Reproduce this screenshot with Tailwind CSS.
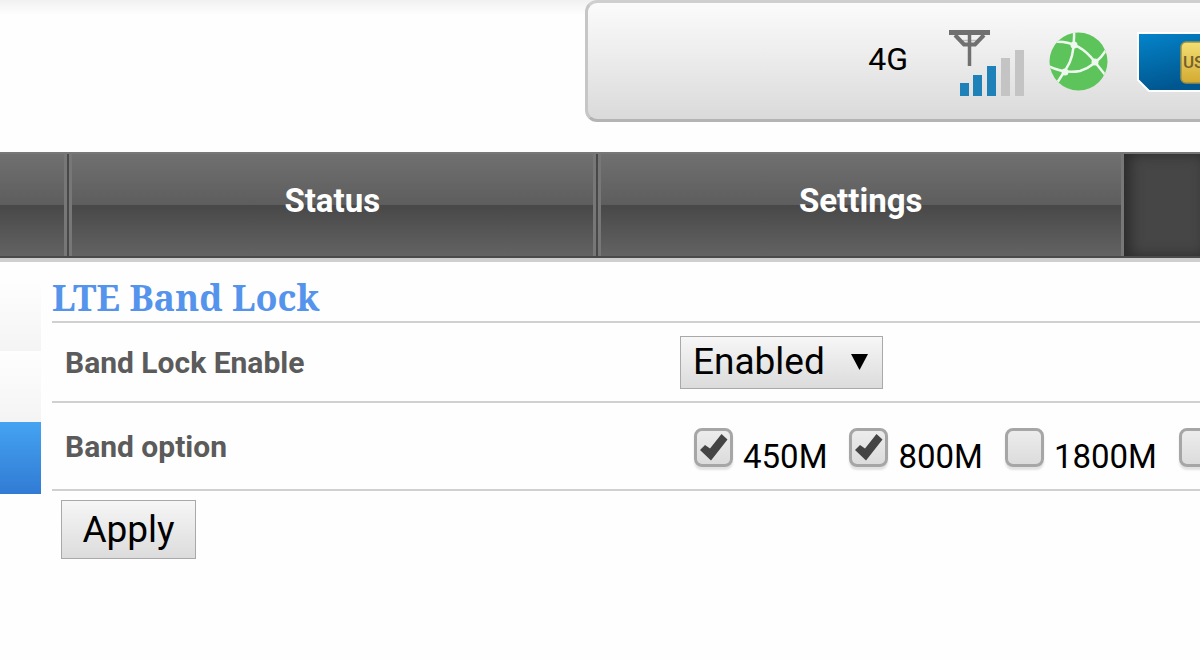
<!DOCTYPE html>
<html lang="en">
<head>
<meta charset="utf-8">
<meta name="viewport" content="width=device-width, initial-scale=1">
<title>LTE Band Lock</title>
<script src="https://cdn.jsdelivr.net/npm/@tailwindcss/browser@4"></script>
</head>
<body class="min-h-screen overflow-x-hidden bg-[#fefefe] font-['Roboto',sans-serif] text-black">

<header class="flex h-[152px] items-start justify-end bg-linear-to-b from-[#f1f1f1] from-0% to-[#fefefe] to-[10%]">
  <div class="flex h-[122px] w-[615px] items-start justify-end rounded-l-xl border-3 border-r-0 border-t-[#cfcfcf] border-l-[#c6c6c6] border-b-[#b4b4b4] bg-linear-to-b from-[#fbfbfb] via-[#ebebeb] to-[#dadada] pt-[27px]">
    <span class="mt-[9px] mr-10 text-[32px] leading-10">4G</span>
    <svg class="mr-6 h-[68px] w-[76px] shrink-0" viewBox="0 0 76 68" aria-label="Signal">
      <g fill="none" stroke="#707070">
        <path d="M1 2.500H42" stroke-width="5"/>
        <path d="M21.500 4V36" stroke-width="3.500"/>
        <path d="M7 5L16 14.500H27L36 5" stroke-width="4"/>
        <path d="M15 10.500H29" stroke-width="1.500" opacity=".4"/>
      </g>
      <g fill="#1e82b9">
        <rect x="12" y="53" width="9" height="13"/>
        <rect x="25" y="45" width="9" height="21"/>
        <rect x="39" y="36" width="9" height="30"/>
      </g>
      <g fill="#c4c4c4">
        <rect x="53" y="28" width="9" height="38"/>
        <rect x="67" y="20" width="9" height="46"/>
      </g>
    </svg>
    <svg class="mt-px mr-7 size-[60px] shrink-0" viewBox="0 0 60 60" aria-label="Connected">
      <clipPath id="disc"><circle cx="30.500" cy="30.500" r="29"/></clipPath>
      <circle cx="30.500" cy="30.500" r="29" fill="#5cc45b"/>
      <g clip-path="url(#disc)" fill="none" stroke="#eef8ee" stroke-width="2.500">
        <path d="M26 0Q27 26 18 38L9 52"/>
        <path d="M4 11Q30 8 47 31L58 45"/>
        <path d="M0 35Q16 43 32 40Q48 35 59 18"/>
      </g>
      <g fill="#eef8ee"><circle cx="26" cy="14" r="3.500"/><circle cx="47" cy="31" r="3.500"/><circle cx="17" cy="41" r="3.500"/></g>
    </svg>
    <svg class="mt-px h-[62px] w-[64px] shrink-0" viewBox="0 0 64 62" aria-label="USIM card">
      <defs>
        <linearGradient id="card" x2=".3" y2="1"><stop stop-color="#0485cb"/><stop offset="1" stop-color="#00568f"/></linearGradient>
        <linearGradient id="chip" x2="0" y2="1"><stop stop-color="#f3df74"/><stop offset="1" stop-color="#d3aa31"/></linearGradient>
      </defs>
      <path d="M2 2H70V60H13L2 49Z" fill="url(#card)" stroke="#fff" stroke-width="2"/>
      <rect x="45" y="11" width="40" height="41" rx="5" fill="url(#chip)" stroke="#9b9147" stroke-width="1.500"/>
      <text x="47" y="37" font-family="Roboto" font-weight="500" font-size="17" fill="#75602c">US</text>
    </svg>
  </div>
</header>

<nav class="flex h-[110px] border-t-2 border-b-4 border-t-[#777] border-b-[#cfcfcf] bg-linear-to-b from-[#707070] via-[#5d5d5d] via-50% to-[#646464] text-[33px] font-bold text-white">
  <a href="#home" aria-label="Home" class="w-[67px] shrink-0 border-b-2 border-b-[#4a4a4a]"><span class="block h-full border-r-3 border-[#777] bg-linear-to-b from-transparent from-[50%] via-[#484848] via-[50%] to-[#636363]"></span></a>
  <a href="#status" class="flex-1 border-b-2 border-l-2 border-b-[#4a4a4a] border-l-[#484848]"><span class="flex h-full items-center justify-center border-x-3 border-[#777] bg-linear-to-b from-transparent from-[50%] via-[#484848] via-[50%] to-[#636363] pb-2">Status</span></a>
  <a href="#settings" class="flex-1 border-b-2 border-l-2 border-b-[#4a4a4a] border-l-[#484848]"><span class="flex h-full items-center justify-center border-x-3 border-[#777] bg-linear-to-b from-transparent from-[50%] via-[#484848] via-[50%] to-[#636363] pb-2">Settings</span></a>
  <a href="#advanced" aria-label="Advanced" class="w-[76px] shrink-0 border-b-2 border-b-[#4a4a4a] bg-[#464646] shadow-[inset_6px_0_14px_#2a2a2a]"></a>
</nav>

<div class="flex">
  <aside class="w-[41px] shrink-0 pt-[18px]">
    <div class="h-[71px] bg-linear-to-b from-[#fefefe] to-[#f4f4f4]"></div>
    <div class="h-[71px] bg-linear-to-b from-[#fefefe] to-[#f4f4f4]"></div>
    <div class="h-[72px] bg-linear-to-b from-[#45a3f2] to-[#317bd4]"></div>
  </aside>
  <main class="ml-[11px] min-w-0 flex-1 overflow-hidden pt-[11px]">
    <h1 class="h-12 font-['Noto_Serif','Liberation_Serif',serif] text-[36px] leading-[50px] font-bold text-[#5594ec]">LTE Band Lock</h1>
    <form>
      <div class="flex h-20 items-center border-t-2 border-[#d0d0d0] pl-[13px]">
        <label for="lock" class="w-[615px] shrink-0 text-[30px] font-bold text-[#5b5b5b]">Band Lock Enable</label>
        <div class="relative">
          <select id="lock" class="h-[53px] w-[203px] appearance-none border border-[#a9a9a9] bg-linear-to-b from-[#f6f6f6] to-[#dcdcdc] pl-3 text-[37px] leading-[48px]"><option>Enabled</option><option>Disabled</option></select>
          <svg class="pointer-events-none absolute top-[18px] right-[15px] h-4 w-[17px]" viewBox="0 0 17 16"><path d="M0 0H17L8.500 16Z"/></svg>
        </div>
      </div>
      <div class="flex h-[90px] items-center border-y-2 border-[#d0d0d0] pl-[13px]">
        <div class="w-[629px] shrink-0 text-[30px] font-bold text-[#5b5b5b]">Band option</div>
        <div class="flex shrink-0 gap-[22px] pt-3 text-[33px] leading-10">
          <label class="flex items-start gap-[10px]"><span class="grid"><input type="checkbox" checked class="peer col-start-1 row-start-1 size-[39px] appearance-none rounded-lg border-3 border-[#a6a6a6] bg-linear-to-b from-[#ececec] to-[#dcdcdc] shadow-[0_3px_2px_#e2e2e2]"><svg class="pointer-events-none col-start-1 row-start-1 hidden size-[39px] peer-checked:block" viewBox="0 0 39 39"><path d="M6 22L11 17L16 20.500L27.500 6L33.500 11.500L17 32.500Z" fill="#444"/></svg></span><span class="pt-[9px]">450M</span></label>
          <label class="flex items-start gap-[10px]"><span class="grid"><input type="checkbox" checked class="peer col-start-1 row-start-1 size-[39px] appearance-none rounded-lg border-3 border-[#a6a6a6] bg-linear-to-b from-[#ececec] to-[#dcdcdc] shadow-[0_3px_2px_#e2e2e2]"><svg class="pointer-events-none col-start-1 row-start-1 hidden size-[39px] peer-checked:block" viewBox="0 0 39 39"><path d="M6 22L11 17L16 20.500L27.500 6L33.500 11.500L17 32.500Z" fill="#444"/></svg></span><span class="pt-[9px]">800M</span></label>
          <label class="flex items-start gap-[10px]"><input type="checkbox" class="size-[39px] appearance-none rounded-lg border-3 border-[#a6a6a6] bg-linear-to-b from-[#ececec] to-[#dcdcdc] shadow-[0_3px_2px_#e2e2e2]"><span class="pt-[9px]">1800M</span></label>
          <input type="checkbox" aria-label="Next band" class="size-[39px] appearance-none rounded-lg border-3 border-[#a6a6a6] bg-linear-to-b from-[#ececec] to-[#dcdcdc] shadow-[0_3px_2px_#e2e2e2]">
        </div>
      </div>
      <button type="button" class="mt-[9px] ml-[9px] h-[59px] w-[135px] border border-[#a9a9a9] bg-linear-to-b from-[#f6f6f6] to-[#dcdcdc] text-[37px] leading-[55px]">Apply</button>
    </form>
  </main>
</div>
</body>
</html>
